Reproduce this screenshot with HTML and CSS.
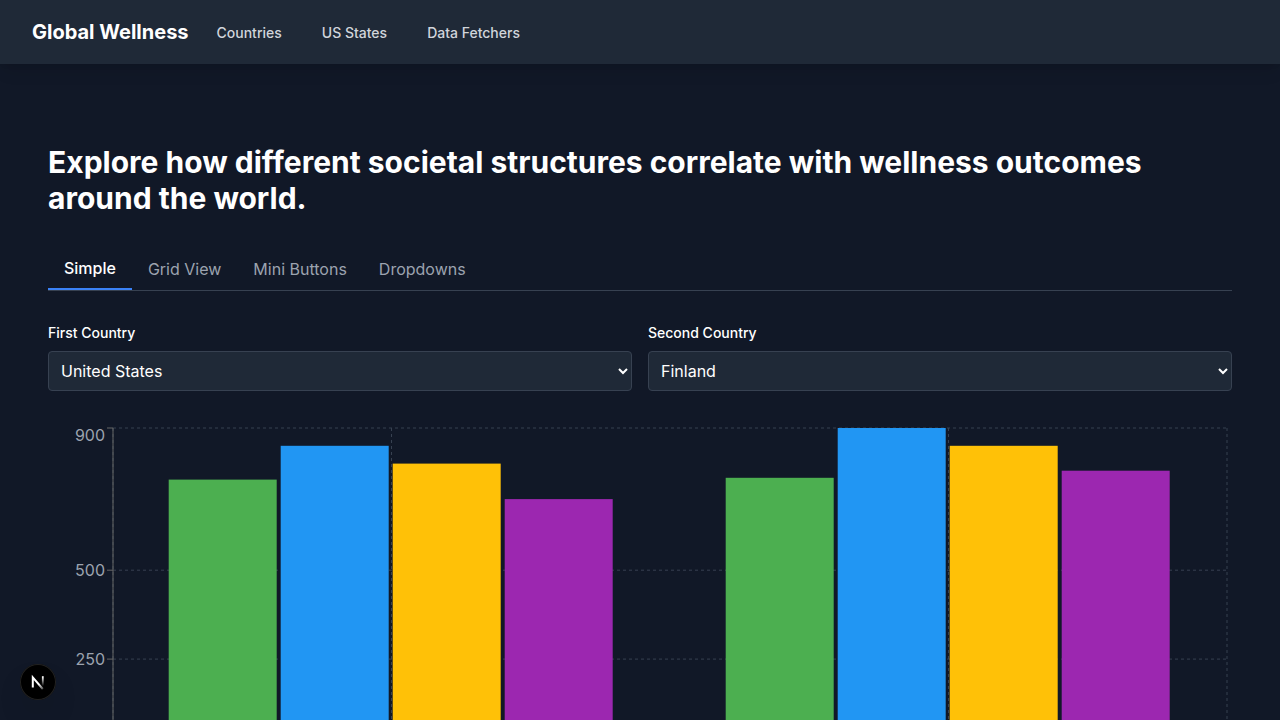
FILE: index.html
```html
<!DOCTYPE html>
<html lang="en">
<head>
<meta charset="utf-8">
<meta name="viewport" content="width=device-width, initial-scale=1">
<title>Global Wellness</title>
<link rel="stylesheet" href="styles.css">
</head>
<body>
<header class="site-header">
  <a class="brand" href="#">Global Wellness</a>
  <nav class="site-nav">
    <a href="#">Countries</a>
    <a href="#">US States</a>
    <a href="#">Data Fetchers</a>
  </nav>
</header>
<main class="content">
  <h1 class="title">Explore how different societal structures correlate with wellness outcomes around the world.</h1>
  <div class="tabs" role="tablist">
    <button class="tab tab-active" type="button" role="tab" aria-selected="true">Simple</button>
    <button class="tab" type="button" role="tab" aria-selected="false">Grid View</button>
    <button class="tab" type="button" role="tab" aria-selected="false">Mini Buttons</button>
    <button class="tab" type="button" role="tab" aria-selected="false">Dropdowns</button>
  </div>
  <div class="pickers">
    <div class="field">
      <label for="first-country">First Country</label>
      <select id="first-country"><option selected>United States</option><option>Finland</option></select>
    </div>
    <div class="field">
      <label for="second-country">Second Country</label>
      <select id="second-country"><option>United States</option><option selected>Finland</option></select>
    </div>
  </div>
  <svg class="chart" viewBox="0 0 1184 360" role="img" aria-label="Country comparison bar chart">
    <g class="grid">
      <path d="M65 5H1179M65 147.2H1179M65 236.1H1179M65 325H1179"/>
      <path d="M343.5 5V325M900.5 5V325M65 5V325M1179 5V325"/>
    </g>
    <path class="axis" d="M65 5V325M59 5H65M59 147.2H65M59 236.1H65M59 325H65"/>
    <g class="ticks">
      <text x="57" y="18">900</text>
      <text x="57" y="153">500</text>
      <text x="57" y="242">250</text>
    </g>
    <g class="bar-green"><rect x="120.7" y="56.6" width="108" height="268.4"/><rect x="677.7" y="54.8" width="108" height="270.2"/></g>
    <g class="bar-blue"><rect x="232.7" y="22.8" width="108" height="302.2"/><rect x="789.7" y="5" width="108" height="320"/></g>
    <g class="bar-amber"><rect x="344.7" y="40.6" width="108" height="284.4"/><rect x="901.7" y="22.8" width="108" height="302.2"/></g>
    <g class="bar-purple"><rect x="456.7" y="76.1" width="108" height="248.9"/><rect x="1013.7" y="47.7" width="108" height="277.3"/></g>
  </svg>
</main>
<button class="dev-badge" type="button" aria-label="Open developer tools">
  <svg viewBox="0 0 36 36" aria-hidden="true">
    <defs>
      <linearGradient id="diagonal-fade" x1="19" y1="20" x2="25" y2="27" gradientUnits="userSpaceOnUse"><stop stop-color="#fff"/><stop offset="1" stop-color="#fff" stop-opacity="0"/></linearGradient>
      <linearGradient id="stem-fade" x1="23" y1="13" x2="23" y2="22" gradientUnits="userSpaceOnUse"><stop stop-color="#fff"/><stop offset="1" stop-color="#fff" stop-opacity="0"/></linearGradient>
    </defs>
    <path d="M12.8 23.6V13.4L22.8 25" fill="none" stroke="url(#diagonal-fade)" stroke-width="2"/>
    <path d="M22.8 12.2V22" stroke="url(#stem-fade)" stroke-width="1.8"/>
  </svg>
</button>
</body>
</html>
```
FILE: styles.css
```css
* { box-sizing: border-box; }

body {
  margin: 0;
  background: #111827;
  color: #fff;
  font: 16px/24px Inter, sans-serif;
  scrollbar-width: none;
}

.site-header {
  display: flex;
  align-items: center;
  gap: 16px;
  height: 64px;
  padding: 0 32px;
  background: #1f2937;
  box-shadow: 0 10px 15px -3px rgba(0, 0, 0, 0.1), 0 4px 6px -4px rgba(0, 0, 0, 0.1);
}

.brand {
  color: #fff;
  font-size: 20px;
  font-weight: 700;
  line-height: 28px;
  text-decoration: none;
}

.site-nav { display: flex; gap: 16px; padding-top: 2px; }

.site-nav a {
  padding: 8px 12px;
  color: #d1d5db;
  font-size: 14px;
  font-weight: 500;
  line-height: 20px;
  text-decoration: none;
}

.content { padding: 80px 48px 48px; }

.title {
  margin: 0 0 32px;
  font-size: 30px;
  font-weight: 700;
  line-height: 36px;
}

.tabs {
  display: flex;
  margin-bottom: 32px;
  border-bottom: 1px solid #374151;
}

.tab {
  padding: 8px 16px;
  border: 0;
  background: none;
  color: #9ca3af;
  font: inherit;
  cursor: pointer;
}

.tab-active {
  border-bottom: 2px solid #3b82f6;
  color: #fff;
  font-weight: 500;
}

.pickers {
  display: grid;
  grid-template-columns: 1fr 1fr;
  gap: 16px;
  margin-bottom: 32px;
}

.field { display: flex; flex-direction: column; gap: 8px; }

.field label {
  font-size: 14px;
  font-weight: 500;
  line-height: 20px;
}

.field select {
  width: 100%;
  height: 40px;
  padding: 8px;
  border: 1px solid #374151;
  border-radius: 4px;
  background: #1f2937;
  color: #fff;
  font: inherit;
}

.chart { display: block; width: 100%; height: auto; }
.grid { fill: none; stroke: #374151; stroke-dasharray: 3 3; }
.axis { fill: none; stroke: #666; }
.ticks { fill: #9ca3af; font-size: 16px; text-anchor: end; }
.bar-green { fill: #4caf50; }
.bar-blue { fill: #2196f3; }
.bar-amber { fill: #ffc107; }
.bar-purple { fill: #9c27b0; }

.dev-badge {
  position: fixed;
  bottom: 20px;
  left: 20px;
  width: 36px;
  height: 36px;
  padding: 0;
  border: 0;
  border-radius: 50%;
  background: #000;
  box-shadow: inset 0 0 0 1px #222, 0 16px 32px -8px rgba(0, 0, 0, 0.24);
}

.dev-badge svg { display: block; width: 100%; }
```
